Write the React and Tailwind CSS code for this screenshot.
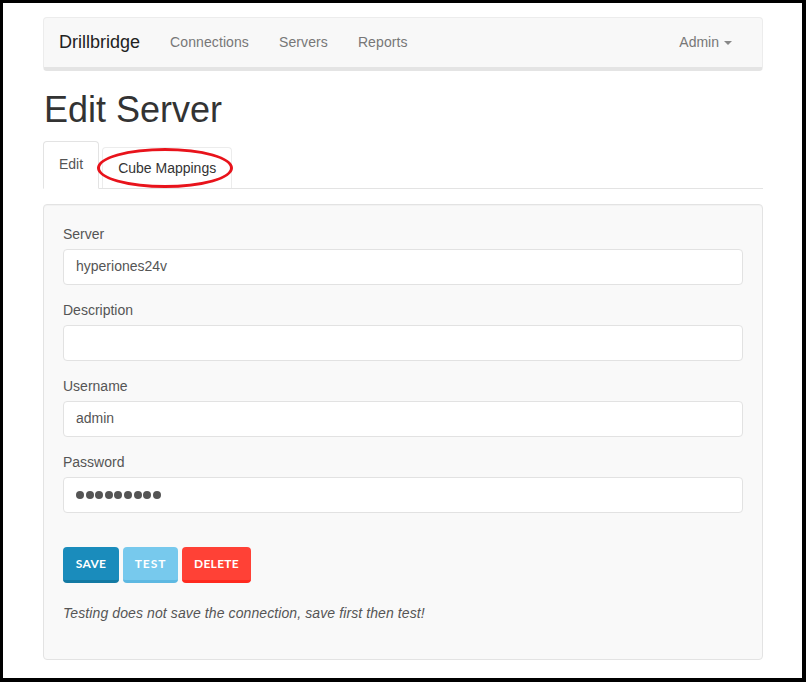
export default function App() {
  const fields = [
    { label: "Server", value: "hyperiones24v" },
    { label: "Description", value: "" },
    { label: "Username", value: "admin" },
  ];
  return (
    <div className="w-[806px] h-[682px] box-border bg-white border-black border-l-[3px] border-t-[3px] border-r-[4px] border-b-[4px] overflow-hidden" style={{ fontFamily: '"Liberation Sans", Arial, sans-serif' }}>
      <div className="ml-[40px] w-[720px] pt-[14px]">
        {/* Navbar */}
        <div className="h-[54px] box-border bg-[#f8f8f8] border border-[#ececec] border-b-[4px] border-b-[#e4e4e4] rounded-[4px] flex items-center text-[14px]">
          <span className="pl-[15px] pr-[15px] text-[18px] text-[#222]">Drillbridge</span>
          <span className="px-[15px] text-[#777] tracking-[0.1px]">Connections</span>
          <span className="px-[15px] text-[#777] tracking-[0.1px]">Servers</span>
          <span className="px-[15px] text-[#777] tracking-[0.1px]">Reports</span>
          <span className="ml-auto pr-[30px] text-[#777] flex items-center">
            Admin
            <span className="ml-[5px] w-0 h-0 border-l-[4px] border-r-[4px] border-t-[4px] border-l-transparent border-r-transparent border-t-[#888]"></span>
          </span>
        </div>

        {/* Heading */}
        <h1 className="mt-[19px] text-[36px] leading-[1.1] text-[#333] pl-[1px]">Edit Server</h1>

        {/* Tabs */}
        <div className="relative mt-[11px] flex items-end border-b border-[#e3e3e3] text-[14px]">
          <div className="h-[48px] box-border px-[15px] flex items-center bg-white border border-[#e3e3e3] border-b-white rounded-t-[4px] text-[#555] -mb-px">
            Edit
          </div>
          <div className="ml-[3px] h-[41px] box-border px-[15px] flex items-center bg-white border border-[#ececec] border-b-0 rounded-t-[4px] text-[#333] pt-[1px]">
            Cube Mappings
          </div>
          <div className="absolute left-[54px] top-[7px] w-[136px] h-[40px] rounded-[50%] border-[3px] border-[#e8131b] pointer-events-none"></div>
        </div>

        {/* Panel */}
        <div className="mt-[15px] bg-[#f9f9f9] border border-[#e3e3e3] rounded-[4px] px-[19px] pt-[19px] pb-[36px] shadow-[inset_0_1px_1px_rgba(0,0,0,0.03)]">
          {fields.map((f) => (
            <div key={f.label} className="mb-[15px]">
              <div className="text-[14px] leading-[20px] text-[#555] mb-[5px]">{f.label}</div>
              <div className="h-[36px] box-border bg-white border border-[#e2e2e2] rounded-[4px] px-[12px] flex items-center text-[14px] text-[#555]">
                {f.value}
              </div>
            </div>
          ))}
          <div className="mb-[15px]">
            <div className="text-[14px] leading-[20px] text-[#555] mb-[5px]">Password</div>
            <div className="h-[36px] box-border bg-white border border-[#e2e2e2] rounded-[4px] px-[12px] flex items-center text-[#555] gap-[1.6px]">
              {Array.from({ length: 9 }).map((_, i) => (
                <span key={i} className="inline-block w-[8px] h-[8px] rounded-full bg-[#555]"></span>
              ))}
            </div>
          </div>

          <div className="mt-[34px] flex gap-[4px] text-[12px] font-bold text-white tracking-[0.3px]" style={{ fontFamily: 'Lato, "Liberation Sans", sans-serif' }}>
            <div className="h-[36px] box-border w-[56px] flex items-center justify-center bg-[#1a8cbc] border-b-[3px] border-[#137aa3] rounded-[4px] pt-[2px]">SAVE</div>
            <div className="h-[36px] box-border w-[55px] flex items-center justify-center bg-[#77c9ed] border-b-[3px] border-[#5eb9e2] rounded-[4px] pt-[2px] tracking-[0.9px]">TEST</div>
            <div className="h-[36px] box-border w-[69px] flex items-center justify-center bg-[#ff4136] border-b-[3px] border-[#ff2a1f] rounded-[4px] pt-[2px]">DELETE</div>
          </div>

          <p className="mt-[20px] text-[14px] leading-[20px] italic text-[#555] tracking-[0.1px]">
            Testing does not save the connection, save first then test!
          </p>
        </div>
      </div>
    </div>
  );
}
